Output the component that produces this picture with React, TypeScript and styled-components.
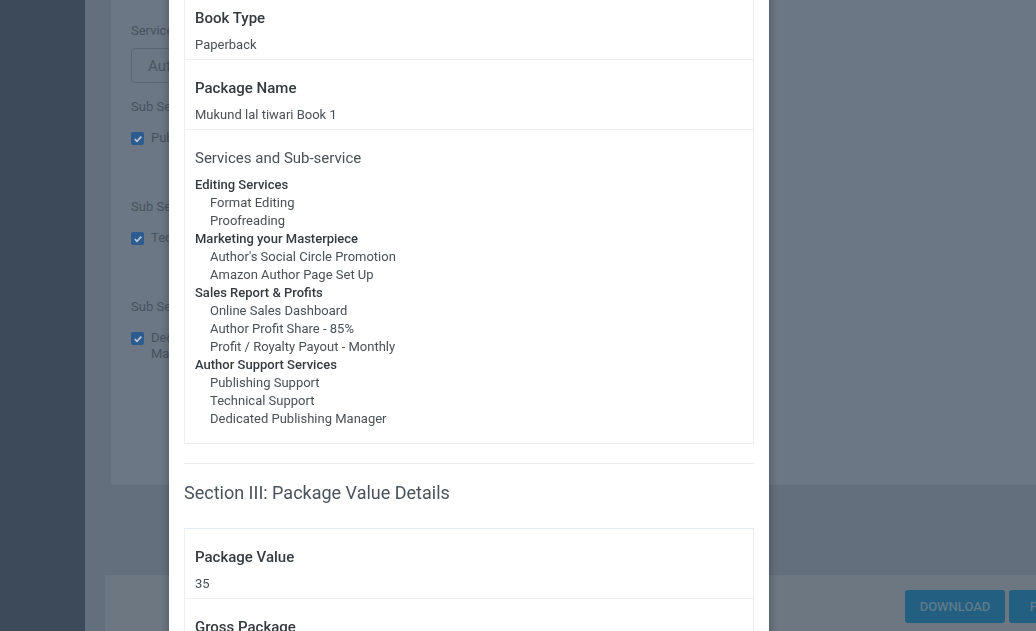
import React, { useLayoutEffect, useRef } from "react";
import styled, { createGlobalStyle } from "styled-components";

const GlobalStyle = createGlobalStyle`
  html, body { margin: 0; padding: 0; overflow: hidden; }
  body { font-family: Roboto, "Liberation Sans", Arial, sans-serif; }
  * { box-sizing: border-box; }
`;

/* ---------- background page (seen dimmed through the backdrop) ---------- */

const Page = styled.div`
  display: flex;
  width: 1120px;
  height: 631px;
  background: #636f7c;
`;

const Sidebar = styled.aside`
  width: 85px;
  flex: none;
  background: #3c4a5a;
`;

const Main = styled.main`
  flex: 1;
  display: flex;
  flex-direction: column;
  padding-left: 20px;
`;

const ContentCard = styled.section`
  margin-left: 6px;
  height: 485px;
  background: #6b7784;
  border-radius: 0 0 4px 4px;
  padding: 21px 20px 0;
  color: #47525f;
  font-size: 13px;
`;

const FieldLabel = styled.div`
  line-height: 20px;
`;

const FakeSelect = styled.div`
  margin-top: 7px;
  width: 420px;
  height: 35px;
  border: 1px solid #5b6774;
  border-radius: 4px;
  padding-left: 16px;
  display: flex;
  align-items: center;
  font-size: 15px;
  color: #4b5663;
`;

const SubGroups = styled.div`
  margin-top: 14px;
  display: flex;
  flex-direction: column;
`;

const SubGroup = styled.div`
  height: 100px;
`;

const CheckRow = styled.label`
  margin-top: 13px;
  display: flex;
  align-items: flex-start;
  gap: 7px;
  line-height: 16px;
`;

const CheckText = styled.span`
  max-width: 130px;
`;

const Box = styled.span`
  width: 13px;
  height: 13px;
  margin-top: 2px;
  border-radius: 2px;
  background: #2b5b8f;
  display: inline-flex;
  align-items: center;
  justify-content: center;
  flex: none;
`;

const Footer = styled.footer`
  margin-top: 90px;
  flex: 1;
  background: #6c7782;
  display: flex;
  justify-content: flex-end;
  align-items: flex-start;
  gap: 4px;
  padding: 15px 15px 0 0;
`;

const FooterButton = styled.button<{ $w: number }>`
  height: 33px;
  padding: 0 14px;
  border: none;
  border-radius: 3px;
  background: #235f80;
  color: #5f7a8c;
  font-family: Roboto, "Liberation Sans", Arial, sans-serif;
  font-size: 13px;
  font-weight: 500;
  text-transform: uppercase;
  min-width: ${(p) => p.$w}px;
`;

const Checkbox = ({ children }: { children: React.ReactNode }) => (
  <CheckRow>
    <Box>
      <svg width="10" height="10" viewBox="0 0 10 10">
        <polyline points="1.8,5.2 4,7.3 8.3,2.6" fill="none" stroke="#b9c5d2" strokeWidth="1.8" />
      </svg>
    </Box>
    <CheckText>{children}</CheckText>
  </CheckRow>
);

/* ---------- modal ---------- */

const Backdrop = styled.div`
  position: fixed;
  inset: 0;
  overflow-y: auto;
  scrollbar-width: none;
  &::-webkit-scrollbar { display: none; }
`;

const Dialog = styled.div`
  width: 600px;
  margin: 28px 0 28px 169px;
  background: #ffffff;
  padding: 15px;
  box-shadow: 0 3px 9px rgba(0, 0, 0, 0.3);
`;

const ModalTitle = styled.h4`
  margin: 0 0 16px;
  font-size: 18px;
  font-weight: 500;
  color: #343a40;
`;

const SectionHeading = styled.h5`
  margin: 0 0 22px;
  font-size: 18px;
  line-height: 27px;
  font-weight: 400;
  color: #4a525c;
`;

const Divider = styled.hr`
  margin: 19px 0 15px;
  border: 0;
  border-top: 1px solid #e9ecef;
`;

const Card = styled.div<{ $accent?: boolean }>`
  border: 1px solid #eceef0;
  border-top-color: ${(p) => (p.$accent ? "#e3edf8" : "#eceef0")};
`;

const Row = styled.div<{ $tall?: boolean }>`
  padding: ${(p) => (p.$tall ? "17px 10px 15px" : "17px 10px 5px")};
  border-bottom: 1px solid #eceef0;
  &:last-child { border-bottom: 0; }
`;

const RowTitle = styled.div<{ $light?: boolean }>`
  font-size: 15px;
  line-height: 22px;
  font-weight: ${(p) => (p.$light ? 400 : 500)};
  color: ${(p) => (p.$light ? "#495057" : "#343a40")};
`;

const RowValue = styled.div`
  margin-top: 7px;
  font-size: 13px;
  line-height: 18px;
  color: #495057;
`;

const ServiceList = styled.ul`
  list-style: none;
  margin: 7px 0 0;
  padding: 0;
  font-size: 13px;
  line-height: 18px;
`;

const ServiceName = styled.li`
  font-weight: 500;
  color: #343a40;
`;

const SubService = styled.li`
  padding-left: 15px;
  color: #495057;
`;

const services = [
  { name: "Editing Services", subs: ["Format Editing", "Proofreading"] },
  { name: "Marketing your Masterpiece", subs: ["Author's Social Circle Promotion", "Amazon Author Page Set Up"] },
  {
    name: "Sales Report & Profits",
    subs: ["Online Sales Dashboard", "Author Profit Share - 85%", "Profit / Royalty Payout - Monthly"],
  },
  {
    name: "Author Support Services",
    subs: ["Publishing Support", "Technical Support", "Dedicated Publishing Manager"],
  },
];

export default function App() {
  const backdropRef = useRef<HTMLDivElement>(null);
  const anchorRef = useRef<HTMLDivElement>(null);

  useLayoutEffect(() => {
    const b = backdropRef.current;
    const a = anchorRef.current;
    if (!b || !a) return;
    const top = a.getBoundingClientRect().top - b.getBoundingClientRect().top + b.scrollTop;
    b.scrollTop = top + 10;
  }, []);

  return (
    <>
      <GlobalStyle />
      <Page>
        <Sidebar />
        <Main>
          <ContentCard>
            <FieldLabel>Services</FieldLabel>
            <FakeSelect>Author Support Services</FakeSelect>
            <SubGroups>
              <SubGroup>
                <FieldLabel>Sub Services</FieldLabel>
                <Checkbox>Publishing Support</Checkbox>
              </SubGroup>
              <SubGroup>
                <FieldLabel>Sub Services</FieldLabel>
                <Checkbox>Technical Support</Checkbox>
              </SubGroup>
              <SubGroup>
                <FieldLabel>Sub Services</FieldLabel>
                <Checkbox>Dedicated Publishing Manager</Checkbox>
              </SubGroup>
            </SubGroups>
          </ContentCard>
          <Footer>
            <FooterButton $w={100}>Download</FooterButton>
            <FooterButton $w={96}>Preview</FooterButton>
          </Footer>
        </Main>
      </Page>

      <Backdrop ref={backdropRef}>
        <Dialog>
          <ModalTitle>Package Preview</ModalTitle>
          <SectionHeading>Section II: Book Details</SectionHeading>
          <Card>
            <Row>
              <RowTitle>Book Title</RowTitle>
              <RowValue>Mukund lal tiwari Book 1</RowValue>
            </Row>
            <Row ref={anchorRef}>
              <RowTitle>Book Type</RowTitle>
              <RowValue>Paperback</RowValue>
            </Row>
            <Row>
              <RowTitle>Package Name</RowTitle>
              <RowValue>Mukund lal tiwari Book 1</RowValue>
            </Row>
            <Row $tall>
              <RowTitle $light>Services and Sub-service</RowTitle>
              <ServiceList>
                {services.map((s) => (
                  <React.Fragment key={s.name}>
                    <ServiceName>{s.name}</ServiceName>
                    {s.subs.map((sub) => (
                      <SubService key={sub}>{sub}</SubService>
                    ))}
                  </React.Fragment>
                ))}
              </ServiceList>
            </Row>
          </Card>
          <Divider />
          <SectionHeading>Section III: Package Value Details</SectionHeading>
          <Card $accent>
            <Row>
              <RowTitle>Package Value</RowTitle>
              <RowValue>35</RowValue>
            </Row>
            <Row>
              <RowTitle>Gross Package</RowTitle>
              <RowValue>35</RowValue>
            </Row>
            <Row>
              <RowTitle>Net Package Value</RowTitle>
              <RowValue>35</RowValue>
            </Row>
          </Card>
        </Dialog>
      </Backdrop>
    </>
  );
}
